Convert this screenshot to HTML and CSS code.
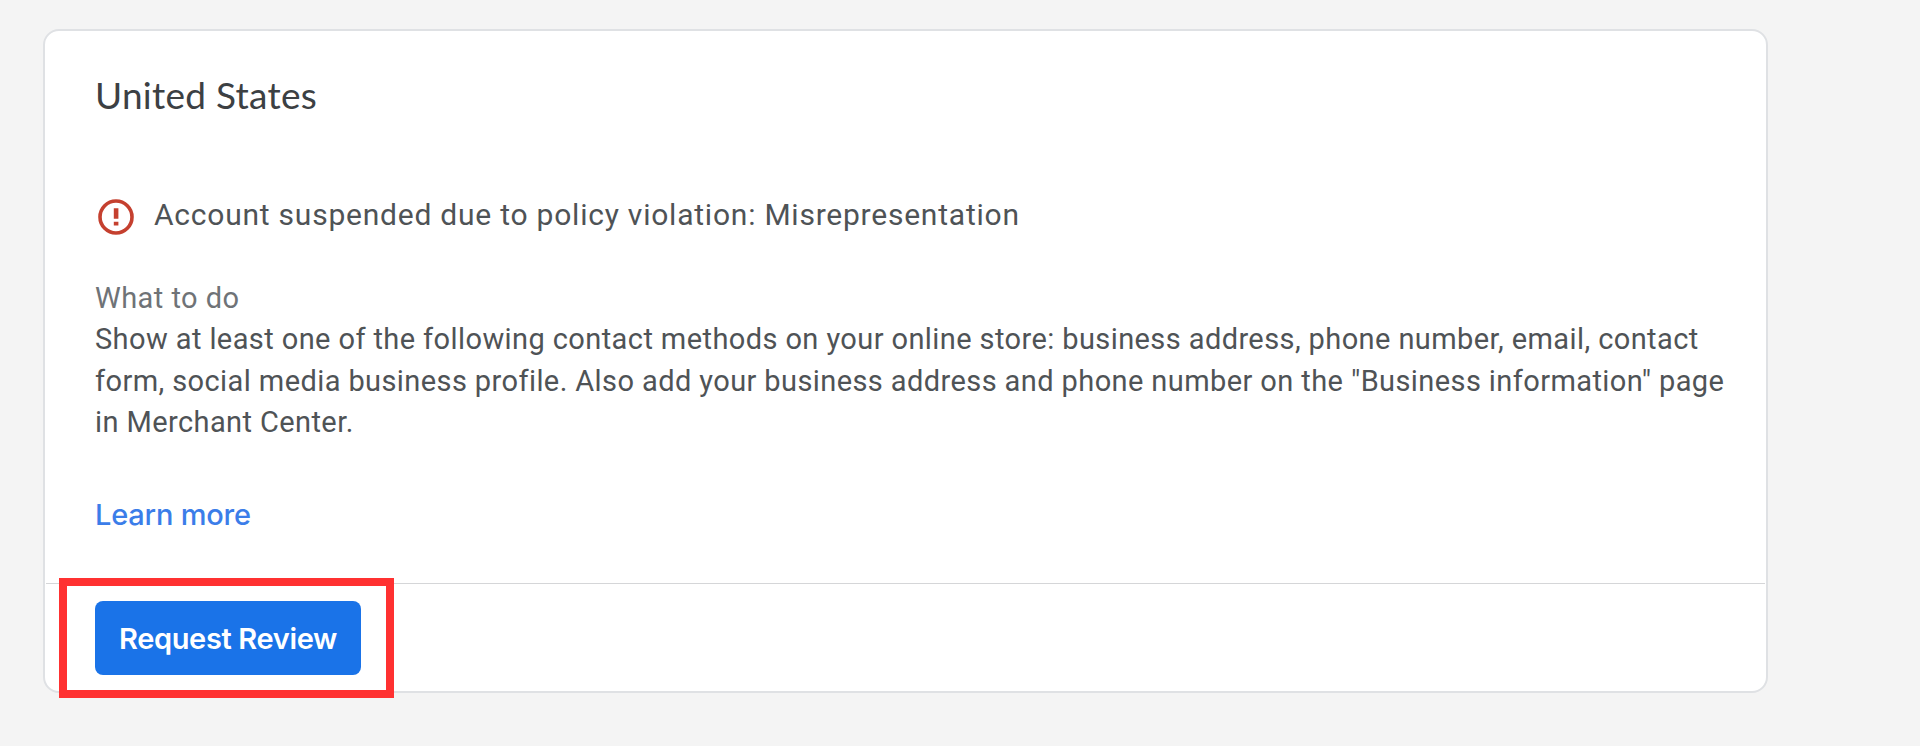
FILE: index.html
```
<!DOCTYPE html>
<html lang="en">
<head>
<meta charset="utf-8">
<title>Account issues</title>
<link rel="stylesheet" href="styles.css">
</head>
<body>
<main class="page">
  <section class="card">
    <div class="card-body">
      <h1 class="title">United States</h1>
      <div class="issue">
        <svg class="issue-icon" viewBox="0 0 36 36" aria-hidden="true">
          <circle cx="18" cy="18" r="16" fill="none" stroke="#c5402f" stroke-width="3.6"/>
          <path d="M15.8 9.2h4.6v10.6h-4.6zM15.8 22.8h4.6v3.6h-4.6z" fill="#c5402f"/>
        </svg>
        <span class="issue-text">Account suspended due to policy violation: Misrepresentation</span>
      </div>
      <div class="help-label">What to do</div>
      <p class="help-text">Show at least one of the following contact methods on your online store: business address, phone number, email, contact<br>form, social media business profile. Also add your business address and phone number on the "Business information" page<br>in Merchant Center.</p>
      <a class="learn-more">Learn more</a>
    </div>
    <footer class="card-footer">
      <button class="review-button" type="button">Request Review</button>
      <div class="highlight"></div>
    </footer>
  </section>
</main>
</body>
</html>
```
FILE: styles.css
```
* { box-sizing: border-box; }

body {
  margin: 0;
  background: #fff;
  font-family: Roboto, "Liberation Sans", sans-serif;
}

.page {
  height: 746px;
  padding: 29px 0 0 43px;
  background: #f4f4f4;
}

.card {
  display: flex;
  flex-direction: column;
  width: 1725px;
  height: 664px;
  border: 2px solid #dfe1e4;
  border-radius: 16px;
  background: #fff;
}

.card-body {
  height: 552px;
  padding: 39px 0 0 50px;
  white-space: nowrap;
}

.title {
  margin: 0;
  color: #3c4043;
  font: 400 37px/50px Lato, sans-serif;
  letter-spacing: 0.28px;
}

.issue {
  display: flex;
  align-items: center;
  gap: 20px;
  height: 40px;
  margin-top: 74px;
  padding-left: 3px;
}

.issue-icon {
  width: 36px;
  height: 36px;
  margin-top: 5px;
}

.issue-text {
  color: #4f5356;
  font-size: 30px;
  letter-spacing: 0.77px;
}

.help-label {
  margin-top: 44px;
  color: #6f7377;
  font-size: 29px;
  line-height: 41.4px;
  letter-spacing: 0.45px;
}

.help-text {
  margin: 0;
  color: #4f5356;
  font-size: 29px;
  line-height: 41.4px;
  letter-spacing: 0.405px;
}

.learn-more {
  display: block;
  margin-top: 52px;
  color: #3b7de9;
  font: 500 29px/38px Inter, sans-serif;
  letter-spacing: -0.2px;
}

.card-footer {
  position: relative;
  flex: 1;
  margin: 0 1px;
  padding: 17px 0 0 49px;
  border-top: 1px solid #d5d6d8;
}

.review-button {
  width: 266px;
  height: 74px;
  padding: 1px 0 0;
  border: 0;
  border-radius: 8px;
  background: #1a73e8;
  color: #fff;
  font: 600 29px/73px Inter, sans-serif;
  letter-spacing: -0.35px;
}

.highlight {
  position: absolute;
  top: -6px;
  left: 13px;
  width: 335px;
  height: 120px;
  border: 8px solid #ff3131;
}
```
